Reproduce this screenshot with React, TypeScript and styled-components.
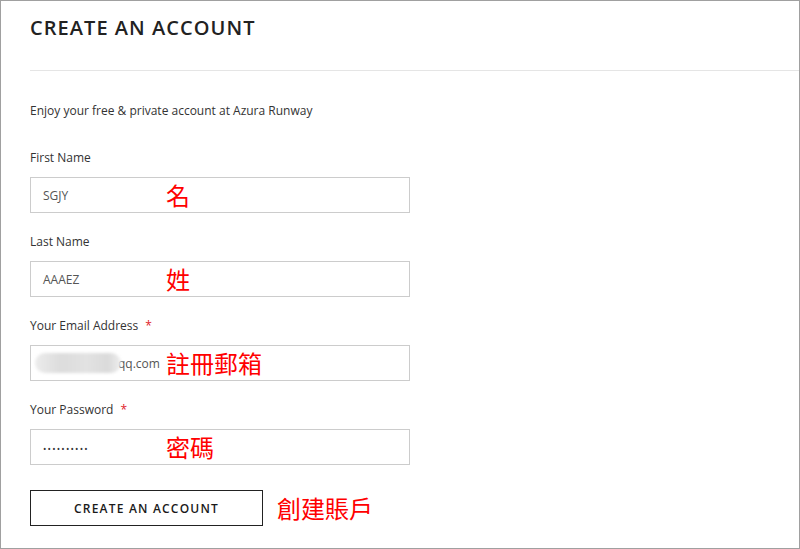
import React from "react";
import styled, { createGlobalStyle } from "styled-components";

const Global = createGlobalStyle`
  html, body { margin: 0; padding: 0; background: #fff; }
  body { font-family: "Open Sans", "Liberation Sans", sans-serif; }
  * { box-sizing: border-box; }
`;

const Frame = styled.div`
  width: 800px;
  height: 549px;
  border: 1px solid #a0a0a0;
  background: #fff;
  overflow: hidden;
`;

const Header = styled.header`
  margin-left: 29px;
  height: 70px;
  border-bottom: 1px solid #e5e5e5;
  padding-top: 13px;
`;

const Title = styled.h1`
  margin: 0;
  font-size: 20px;
  line-height: 28px;
  font-weight: 600;
  letter-spacing: 1.05px;
  color: #222;
`;

const Body = styled.div`
  padding: 31px 0 0 29px;
  display: flex;
  flex-direction: column;
`;

const Intro = styled.p`
  margin: 0 0 28px;
  font-size: 12px;
  line-height: 18px;
  color: #333;
`;

const Field = styled.div`
  display: flex;
  flex-direction: column;
  margin-bottom: 19px;
`;

const Label = styled.label`
  font-size: 12px;
  line-height: 18px;
  color: #333;
  padding-top: 1px;
  margin-bottom: 10px;
`;

const Required = styled.span`
  color: #e01a2a;
  margin-left: 7px;
`;

const InputBox = styled.div`
  position: relative;
  width: 380px;
  height: 36px;
  border: 1px solid #cccccc;
  display: flex;
  align-items: center;
  padding-left: 12px;
  font-size: 12px;
  color: #555;
`;

const Note = styled.span`
  font-family: "Noto Sans CJK TC", "Noto Sans CJK SC", sans-serif;
  font-size: 24px;
  line-height: 28px;
  color: #ff0000;
  white-space: nowrap;
`;

const OverNote = styled(Note)`
  position: absolute;
  left: 135px;
  top: 50%;
  transform: translateY(-50%);
`;

const Blur = styled.span`
  display: inline-block;
  width: 86px;
  height: 20px;
  margin-left: -8px;
  margin-right: -3px;
  border-radius: 10px;
  background: linear-gradient(90deg, #ececec 0%, #dcdcdc 30%, #e2e2e2 60%, #dadada 85%, #eeeeee 100%);
  filter: blur(1.5px);
`;

const Dots = styled.span`
  font-size: 9px;
  letter-spacing: 1.2px;
  color: #333;
  padding-top: 2px;
`;

const ButtonRow = styled.div`
  display: flex;
  align-items: center;
  gap: 14px;
  margin-top: 6px;
`;

const Button = styled.button`
  width: 233px;
  height: 36px;
  border: 1px solid #222;
  background: #fff;
  font-family: "Open Sans", "Liberation Sans", sans-serif;
  font-size: 12px;
  font-weight: 600;
  letter-spacing: 1.2px;
  color: #1a1a1a;
  padding: 0;
`;

export default function App() {
  return (
    <>
      <Global />
      <Frame>
        <Header>
          <Title>CREATE AN ACCOUNT</Title>
        </Header>
        <Body>
          <Intro>Enjoy your free &amp; private account at Azura Runway</Intro>
          <Field>
            <Label>First Name</Label>
            <InputBox>
              SGJY
              <OverNote>名</OverNote>
            </InputBox>
          </Field>
          <Field>
            <Label>Last Name</Label>
            <InputBox>
              AAAEZ
              <OverNote>姓</OverNote>
            </InputBox>
          </Field>
          <Field>
            <Label>
              Your Email Address<Required>*</Required>
            </Label>
            <InputBox>
              <Blur />
              qq.com
              <OverNote>註冊郵箱</OverNote>
            </InputBox>
          </Field>
          <Field>
            <Label>
              Your Password<Required>*</Required>
            </Label>
            <InputBox>
              <Dots>••••••••••</Dots>
              <OverNote>密碼</OverNote>
            </InputBox>
          </Field>
          <ButtonRow>
            <Button>CREATE AN ACCOUNT</Button>
            <Note>創建賬戶</Note>
          </ButtonRow>
        </Body>
      </Frame>
    </>
  );
}
